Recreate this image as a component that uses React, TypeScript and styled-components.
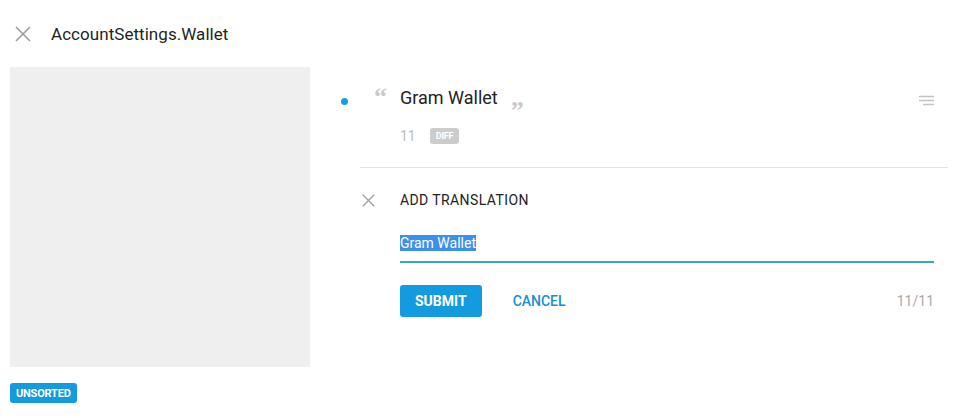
import React, { useEffect, useRef } from "react";
import styled, { createGlobalStyle } from "styled-components";

const Global = createGlobalStyle`
  html, body { margin: 0; padding: 0; background: #fff; }
  body { font-family: Roboto, "Noto Sans", "Liberation Sans", sans-serif; color: #222; }
  * { box-sizing: border-box; }
`;

const Page = styled.div`
  width: 956px;
  height: 418px;
  overflow: hidden;
`;

const Header = styled.header`
  height: 67px;
  display: flex;
  align-items: center;
  padding: 0 0 0 14px;
  gap: 19px;
`;

const IconButton = styled.button`
  border: 0;
  background: none;
  padding: 0;
  width: 18px;
  height: 18px;
  display: flex;
  align-items: center;
  justify-content: center;
  cursor: pointer;
`;

const Title = styled.h1`
  margin: 0;
  font-size: 17px;
  font-weight: 400;
  color: #1f1f1f;
  letter-spacing: 0.05px;
`;

const Main = styled.main`
  display: grid;
  grid-template-columns: 300px 608px;
  column-gap: 30px;
  padding-left: 10px;
`;

const LeftCol = styled.div`
  display: flex;
  flex-direction: column;
  align-items: flex-start;
  gap: 16px;
`;

const Preview = styled.div`
  width: 300px;
  height: 300px;
  background: #efefef;
`;

const Badge = styled.span<{ $bg: string; $size: number; $h: number; $pad: number }>`
  display: inline-flex;
  align-items: center;
  height: ${(p) => p.$h}px;
  padding: 0 ${(p) => p.$pad}px;
  border-radius: 3px;
  background: ${(p) => p.$bg};
  color: #fff;
  font-weight: 700;
  font-size: ${(p) => p.$size}px;
  letter-spacing: -0.2px;
`;

const RightCol = styled.section`
  display: flex;
  flex-direction: column;
`;

const SourceRow = styled.div`
  display: grid;
  grid-template-columns: 60px 1fr auto;
  padding: 19px 13px 0 0;
  height: 100px;
`;

const Marker = styled.div`
  display: flex;
  align-items: flex-start;
  gap: 26px;
  padding-left: 1px;
`;

const Dot = styled.span`
  margin-top: 12px;
  width: 7px;
  height: 7px;
  border-radius: 50%;
  background: #1b9ce2;
`;

const Quote = styled.span<{ $offset: number }>`
  color: #c9c9c9;
  font-size: 26px;
  line-height: 24px;
  font-weight: 700;
  font-family: "Liberation Serif", "DejaVu Serif", serif;
  position: relative;
  top: ${(p) => p.$offset}px;
`;

const Source = styled.div`
  display: flex;
  flex-direction: column;
  gap: 18px;
`;

const SourceText = styled.div`
  display: flex;
  align-items: flex-start;
  gap: 13px;
  font-size: 18px;
  line-height: 24px;
  color: #222;
`;

const Meta = styled.div`
  display: flex;
  align-items: center;
  gap: 14px;
  color: #bdbdbd;
  font-size: 14px;
`;

const MenuButton = styled(IconButton)`
  width: 16px;
  height: 16px;
  margin-top: 7px;
`;

const Divider = styled.hr`
  margin: 0 0 0 20px;
  border: 0;
  border-top: 1px solid #e4e4e4;
`;

const Editor = styled.div`
  display: grid;
  grid-template-columns: 60px 1fr;
  padding: 23px 14px 0 0;
`;

const EditorClose = styled(IconButton)`
  margin-left: 20px;
  width: 16px;
  height: 18px;
`;

const EditorBody = styled.div`
  display: flex;
  flex-direction: column;
`;

const EditorTitle = styled.div`
  font-size: 14px;
  font-weight: 400;
  line-height: 18px;
  color: #222;
  letter-spacing: 0.4px;
`;

const Field = styled.input`
  margin-top: 20px;
  width: 100%;
  height: 34px;
  border: 0;
  border-bottom: 2px solid #3ba5c9;
  padding: 1px 0 5px 0;
  font-family: Roboto, sans-serif;
  font-size: 14px;
  color: #222;
  outline: none;
  background: transparent;
  &::selection {
    background: #3d8fec;
    color: #fff;
  }
`;

const Actions = styled.div`
  margin-top: 22px;
  display: flex;
  align-items: center;
`;

const Button = styled.button<{ $primary?: boolean }>`
  height: 32px;
  padding: 0 ${(p) => (p.$primary ? 15 : 31)}px;
  border: 0;
  border-radius: 3px;
  font-family: Roboto, sans-serif;
  font-size: 14px;
  font-weight: ${(p) => (p.$primary ? 700 : 500)};
  letter-spacing: 0;
  background: ${(p) => (p.$primary ? "#139be0" : "transparent")};
  color: ${(p) => (p.$primary ? "#fff" : "#1a8ed3")};
  cursor: pointer;
`;

const Counter = styled.span`
  margin-left: auto;
  color: #a9a9a9;
  font-size: 14px;
`;

const CloseIcon = ({ size = 16 }: { size?: number }) => (
  <svg width={size} height={size} viewBox="0 0 16 16">
    <path d="M1 1 L15 15 M15 1 L1 15" stroke="#9e9e9e" strokeWidth="1.6" fill="none" />
  </svg>
);

const MenuIcon = () => (
  <svg width="16" height="12" viewBox="0 0 16 12">
    <path d="M0 1.5 H15 M0 5.5 H15 M4 9.5 H15" stroke="#c4c4c4" strokeWidth="1.4" fill="none" />
  </svg>
);

export default function App() {
  const ref = useRef<HTMLInputElement>(null);
  useEffect(() => {
    const el = ref.current;
    if (el) {
      el.focus();
      el.setSelectionRange(0, el.value.length);
    }
  }, []);
  return (
    <Page>
      <Global />
      <Header>
        <IconButton aria-label="Close">
          <CloseIcon size={16} />
        </IconButton>
        <Title>AccountSettings.Wallet</Title>
      </Header>
      <Main>
        <LeftCol>
          <Preview />
          <Badge $bg="#139be0" $size={11} $h={20} $pad={6}>UNSORTED</Badge>
        </LeftCol>
        <RightCol>
          <SourceRow>
            <Marker>
              <Dot />
              <Quote $offset={-1}>“</Quote>
            </Marker>
            <Source>
              <SourceText>
                <span>Gram Wallet</span>
                <Quote $offset={13}>”</Quote>
              </SourceText>
              <Meta>
                <span>11</span>
                <Badge $bg="#cccccc" $size={9} $h={16} $pad={6}>DIFF</Badge>
              </Meta>
            </Source>
            <MenuButton aria-label="Menu">
              <MenuIcon />
            </MenuButton>
          </SourceRow>
          <Divider />
          <Editor>
            <EditorClose aria-label="Close editor">
              <CloseIcon size={13} />
            </EditorClose>
            <EditorBody>
              <EditorTitle>ADD TRANSLATION</EditorTitle>
              <Field ref={ref} defaultValue="Gram Wallet" />
              <Actions>
                <Button $primary>SUBMIT</Button>
                <Button>CANCEL</Button>
                <Counter>11/11</Counter>
              </Actions>
            </EditorBody>
          </Editor>
        </RightCol>
      </Main>
    </Page>
  );
}
